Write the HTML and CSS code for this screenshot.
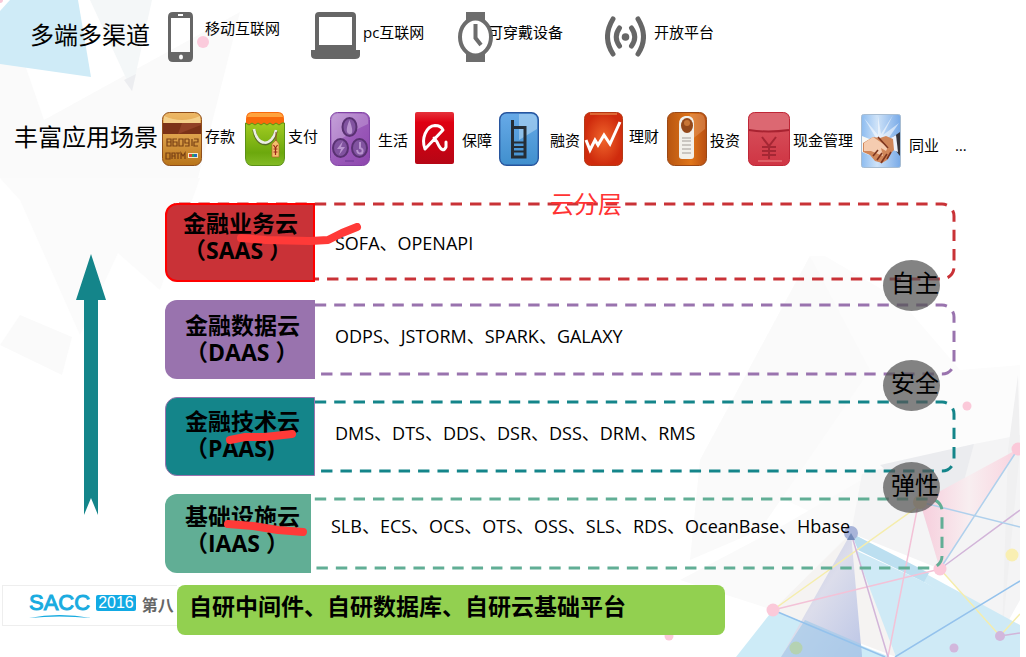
FILE: index.html
```html
<!DOCTYPE html>
<html lang="zh-CN">
<head>
<meta charset="utf-8">
<title>云分层</title>
<link rel="stylesheet" href="styles.css">
</head>
<body>
<main class="slide">
  <div class="backdrop" aria-hidden="true">
    <svg class="backdrop-left" width="400" height="420" viewBox="0 0 400 420">
      <path d="M24 62 44 120 240 12 198 178H0V63Z" fill="#fafafa"/>
      <path d="M0 178 200 178 160 290 118 253 80 335 20 200Z" fill="#fbfbfb"/>
      <path d="M20 315 72 337 62 375 0 345Z" fill="#fafafa"/>
      <path d="M90 0H152L132 91Z" fill="#f4f7f8"/>
      <path d="M124 80 136 74 132 91Z" fill="#ecedf0"/>
      <path d="M0 11 10 0H78L91 77 0 64Z" fill="#cfebf7"/>
      <circle cx="0" cy="0" r="3" fill="#f8c8d8"/>
      <circle cx="203" cy="42" r="6" fill="#fbcbdc"/>
    </svg>
    <svg class="backdrop-right" width="380" height="457" viewBox="640 200 380 457">
      <defs>
        <linearGradient id="lav" x1="0" y1="0" x2="1" y2="1"><stop offset="0" stop-color="#b4bbdf"/><stop offset="0.5" stop-color="#dcddeb"/><stop offset="1" stop-color="#bcc6e6"/></linearGradient>
        <linearGradient id="rose" x1="0" y1="0" x2="1" y2="0"><stop offset="0" stop-color="#f6cddc"/><stop offset="0.5" stop-color="#f8eef0"/><stop offset="1" stop-color="#f9d3df"/></linearGradient>
      </defs>
      <path d="M810 256H825L900 300 960 370 1020 365V500L860 535 700 460Z" fill="#fcfcfc"/>
      <path d="M810 256 700 460 690 560 760 530 870 370Z" fill="#fafafa"/>
      <path d="M680 580 775 530 870 475 851 533 773 610Z" fill="#fafafa"/>
      <path d="M862 474 974 444 1020 435V600L1000 636 940 569 851 533Z" fill="#f4f4f5"/>
      <path d="M974 444 880 465 920 502 940 569Z" fill="#ebecef"/>
      <path d="M1018 375 1020 450 1002 636 1008 450Z" fill="#f0f0f1"/>
      <path d="M851 533 773 610 896 657Z" fill="#f5f3f2"/>
      <path d="M773 610 736 657H890Z" fill="#cdebf7"/>
      <path d="M855 550 924 582 1020 634V657H896Z" fill="#cfeaf6"/>
      <path d="M851 533 1020 625V640L924 582Z" fill="#cfeaf6"/>
      <path d="M851 533 929 573 924 582 858 550Z" fill="#bcdff0"/>
      <path d="M851 533 781 657H862Z" fill="url(#lav)"/>
      <path d="M805 620 781 657H862L861 644Z" fill="#a4cbea" opacity=".7"/>
      <path d="M920 502 1018 449 940 569Z" fill="url(#rose)"/>
      <g fill="none" stroke-width="1.5">
        <path d="M773 610 920 505M940 569 1000 636 1020 614" stroke="#f5edac"/>
        <path d="M773 610 940 569M918 505 888 657" stroke="#f3c2d7"/>
        <path d="M851 533 888 657M940 569 1020 510M1000 636 1020 633" stroke="#d2b5d9"/>
        <path d="M1018 449 940 569M920 502 1020 527" stroke="#afd0ec"/>
        <path d="M773 610 885 657M895 657 1020 581" stroke="#94c2ec"/>
      </g>
      <circle cx="851" cy="533" r="7" fill="#a8b4d9"/>
      <path d="M851 533 847 540H855Z" fill="#7289b8"/>
      <g fill="#fbc9d9"><circle cx="1018" cy="449" r="6.500"/><circle cx="940" cy="569" r="6.500"/><circle cx="773" cy="610" r="6.500"/><circle cx="967" cy="406" r="4.500"/><circle cx="669" cy="636" r="4.500"/></g>
      <circle cx="1012" cy="555" r="6.500" fill="#f9efb2"/>
      <circle cx="796" cy="648" r="6.500" fill="#b5d2b2"/>
      <circle cx="954" cy="648" r="4.500" fill="#d2b7dc"/>
      <circle cx="1000" cy="636" r="5" fill="#d2b7dc"/>
      <circle cx="920" cy="502" r="7" fill="#f3d9b0"/>
    </svg>
  </div>

  <section class="row channels">
    <h2 class="heading">多端多渠道</h2>
    <div class="item raised">
      <svg class="icon phone" width="26" height="50" viewBox="0 0 26 50"><path fill-rule="evenodd" fill="#666" d="M5 0H21Q25 0 25 5V45Q25 50 21 50H5Q0 50 0 45V5Q0 0 5 0ZM3 6V40H22V6ZM10 2V4H15V2ZM13 42.500A2 2.500 0 1 0 13 47.500A2 2.500 0 1 0 13 42.500Z"/></svg>
      <span class="label">移动互联网</span>
    </div>
    <div class="item">
      <svg class="icon" width="49" height="50" viewBox="0 0 49 50"><path fill-rule="evenodd" fill="#666" d="M8 0H41Q45 0 45 4V38H49V43Q49 47 44 47H5Q0 47 0 43V38H4V4Q4 0 8 0ZM8 5V33H41V5Z"/></svg>
      <span class="label">pc互联网</span>
    </div>
    <div class="item overlap">
      <svg class="icon" width="35" height="50" viewBox="0 0 35 50"><path fill="#666" d="M8 0H27V9H8ZM8 41H27V50H8Z"/><ellipse cx="17.500" cy="25" rx="15.500" ry="18.500" fill="#fff" stroke="#666" stroke-width="4"/><path d="M17.500 12V26L23 33" fill="none" stroke="#666" stroke-width="4"/></svg>
      <span class="label">可穿戴设备</span>
    </div>
    <div class="item wide">
      <svg class="icon" width="41" height="42" viewBox="0 0 41 42"><circle cx="20.500" cy="21" r="3.800" fill="#666"/><g fill="none" stroke="#666" stroke-width="5" stroke-linecap="round"><path d="M8 3Q-3 21 8 38M14.500 12Q8 21 14.500 30M33 3Q44 21 33 38M26.500 12Q33 21 26.500 30"/></g></svg>
      <span class="label">开放平台</span>
    </div>
  </section>

  <section class="row scenes">
    <h2 class="heading">丰富应用场景</h2>
    <div class="item raised">
      <svg class="icon" width="40" height="54" viewBox="0 0 40 54"><defs><linearGradient id="card" x1="0" y1="0" x2="0" y2="1"><stop offset="0" stop-color="#edb866"/><stop offset=".45" stop-color="#dca04a"/><stop offset="1" stop-color="#b87419"/></linearGradient></defs><rect x=".5" y=".5" width="39" height="53" rx="7" fill="url(#card)" stroke="#8f4e1a"/><path d="M2 4Q20 12 38 4V11H2Z" fill="#fbe0a3" opacity=".65"/><path d="M1 11H39V22H1Z" fill="#7b3218"/><path d="M16 22 39 13V11H20Z" fill="#914126"/><g fill="none" stroke="#784015" stroke-width="1.200"><path d="M5 27H9V34H5ZM5 30H9M15 27H11V34H15V30H11M17 27H21V34H17ZM27 27H23V31H27M27 27V34H23M30 27V34M32 27H36V30H32V34H36"/><path d="M4 41H8V47H4ZM10 47V41H13V47M10 44H13M14 41H18M16 41V47M19 47V41L21 44 23 41V47"/></g><path d="M26 41H36V46H26Z" fill="#f2e9c8"/><path d="M27 42H30V45H27Z" fill="#d43"/><path d="M30 42H32V45H30Z" fill="#2aa55a"/><path d="M32 42H35V45H32Z" fill="#236dbb"/></svg>
      <span class="label">存款</span>
    </div>
    <div class="item raised">
      <svg class="icon" width="40" height="54" viewBox="0 0 40 54"><defs><linearGradient id="bag" x1="0" y1="0" x2="0" y2="1"><stop offset="0" stop-color="#a2cb21"/><stop offset=".7" stop-color="#6ca80d"/><stop offset="1" stop-color="#83bb25"/></linearGradient></defs><path d="M7 0H33Q39 0 39 7V15H1V7Q1 0 7 0Z" fill="#f96a0b"/><path d="M7 1H33Q37 1 38 5H2Q3 1 7 1Z" fill="#ffa33d"/><path d="M0.500 11 4 13 7 11 10 13 13 11 16 13 19 11 22 13 25 11 28 13 31 11 34 13 37 11H39.500V46Q39 53.500 33 53.500H7Q1 53.500 .5 46Z" fill="url(#bag)" stroke="#5b9117"/><path d="M9 18C12 36 27 36 31 19" fill="none" stroke="#586e28" stroke-width="3.500"/><path d="M9 17C12 35 27 35 31 18" fill="none" stroke="#eceee6" stroke-width="2.500"/><path d="M27 32 31 28 34 32V45H27Z" fill="#f4c06c" stroke="#b2652c" stroke-width=".7"/><path d="M31 20V29" stroke="#944b29"/><path d="M28.500 33 30.500 36 32.500 33M30.500 36V43M28.500 37H32.500M28.500 40H32.500" fill="none" stroke="#9b2819" stroke-width="1.200"/></svg>
      <span class="label">支付</span>
    </div>
    <div class="item spaced">
      <svg class="icon" width="40" height="54" viewBox="0 0 40 54"><defs><linearGradient id="vio" x1="0" y1="0" x2="1" y2="1"><stop offset="0" stop-color="#bb93d2"/><stop offset=".5" stop-color="#9b5bba"/><stop offset="1" stop-color="#8d45ad"/></linearGradient></defs><rect x=".5" y=".5" width="39" height="53" rx="7" fill="url(#vio)" stroke="#8143a5"/><path d="M7 2H34Q38 3 38 8V12Q24 18 2 33V7Q3 2 7 2Z" fill="#d8bee5" opacity=".35"/><g fill="#8153a0" stroke="#593172" stroke-width="2"><ellipse cx="19.500" cy="15" rx="7" ry="9"/><ellipse cx="10.500" cy="36" rx="7.500" ry="9"/><ellipse cx="29.500" cy="36" rx="7.500" ry="9"/></g><path d="M19.500 8Q14 21 19.500 22T19.500 8M13 29 7 37H11L9 43 15 35H11Z" fill="#b994cf"/><path d="M30 30V36Q34 37 32 41 28 43 27 38" fill="none" stroke="#b994cf" stroke-width="2"/><path d="M15 49H24" stroke="#6c3694"/></svg>
      <span class="label">生活</span>
    </div>
    <div class="item spaced">
      <svg class="icon" width="39" height="54" viewBox="0 0 39 54"><defs><linearGradient id="umb" x1="0" y1="0" x2="0" y2="1"><stop offset="0" stop-color="#e5323b"/><stop offset=".2" stop-color="#df0012"/><stop offset="1" stop-color="#b60615"/></linearGradient></defs><rect width="39" height="52" rx="2" fill="url(#umb)"/><path d="M10 37C6 27 11 14 20 13.500Q26 13.500 28 18L10 37M19 26Q22 29 24 34 28 41 31 35V30" fill="none" stroke="#fff" stroke-width="3" stroke-linejoin="round" stroke-linecap="round"/></svg>
      <span class="label">保障</span>
    </div>
    <div class="item loose">
      <svg class="icon" width="40" height="54" viewBox="0 0 40 54"><defs><linearGradient id="blu" x1="0" y1="0" x2="0" y2="1"><stop offset="0" stop-color="#67aae8"/><stop offset="1" stop-color="#408fcd"/></linearGradient></defs><rect x=".7" y=".7" width="38.600" height="52.600" rx="7" fill="url(#blu)" stroke="#27559e" stroke-width="1.400"/><path d="M8 2H32Q38 2 38 9V17L20 28V2Z" fill="#b9dbf4" opacity=".55"/><path d="M13.500 8V45H26V15.500H14" fill="none" stroke="#252d35" stroke-width="3"/><path d="M15 30.500H26M15 35H26M15 39.500H26" stroke="#252d35" stroke-width="2"/></svg>
      <span class="label">融资</span>
    </div>
    <div class="item raised medium">
      <svg class="icon" width="39" height="54" viewBox="0 0 39 54"><defs><radialGradient id="org"><stop offset="0" stop-color="#f0662c"/><stop offset="1" stop-color="#cf2b0d"/></radialGradient></defs><rect x=".5" y=".5" width="38" height="53" rx="6" fill="url(#org)" stroke="#b63915"/><path d="M6 2H33" stroke="#eca45a"/><path d="M2 28 6 38 11 28 14 33 20 23 26 32 36 10" fill="none" stroke="#fff" stroke-width="3"/></svg>
      <span class="label">理财</span>
    </div>
    <div class="item">
      <svg class="icon" width="40" height="54" viewBox="0 0 40 54"><defs><linearGradient id="door"><stop offset="0" stop-color="#b85510"/><stop offset=".6" stop-color="#e0761a"/><stop offset="1" stop-color="#b84e12"/></linearGradient></defs><rect x=".5" y=".5" width="39" height="53" rx="7" fill="url(#door)" stroke="#9b4815"/><path d="M23 2H33Q38 3 38 9V17L23 29Z" fill="#e6a06b" opacity=".45"/><path d="M18 4H22Q27 5 27 12V44Q27 47 24 47H15Q12 47 12 44V12Q12 5 18 4Z" fill="#f2f0eb"/><ellipse cx="20" cy="13.500" rx="6" ry="7.500" fill="#94481a"/><circle cx="20" cy="11" r="3" fill="#c87535"/><path d="M15 26H24M15 29H24M15 33H24M15 37H24M15 41H24" stroke="#bdb8b4" stroke-width="1.500"/></svg>
      <span class="label">投资</span>
    </div>
    <div class="item">
      <svg class="icon" width="42" height="54" viewBox="0 0 42 54"><defs><linearGradient id="red" x1="0" y1="0" x2="0" y2="1"><stop offset="0" stop-color="#d85660"/><stop offset="1" stop-color="#cf3544"/></linearGradient></defs><rect x=".5" y=".5" width="41" height="53" rx="6" fill="url(#red)" stroke="#bf2737"/><path d="M1 18Q20 22 41 18V7Q40 1 34 1H8Q2 1 1 7Z" fill="#dc6872"/><path d="M1 18Q20 21 41 18" fill="none" stroke="#a82331" stroke-width="2"/><path d="M14 25 21 34 28 25M21 34V47M14 35H28M14 39H28M14 43H28" fill="none" stroke="#a52734" stroke-width="2"/><path d="M10 49H34" stroke="#e88"/></svg>
      <span class="label">现金管理</span>
    </div>
    <div class="item spaced lowered">
      <svg class="icon" width="40" height="54" viewBox="0 0 40 54"><defs><linearGradient id="sky"><stop offset="0" stop-color="#8dbcf0"/><stop offset=".4" stop-color="#cfe3f8"/><stop offset="1" stop-color="#78aae8"/></linearGradient></defs><rect x=".5" y=".5" width="39" height="53" rx="2" fill="url(#sky)" stroke="#a8bdd2"/><path d="M15 24 3 4 17 21 17 2 20 20 32 1 22 21 38 9 27 25" fill="#fff" opacity=".55"/><path d="M1 22 11 26 8 41 1 38Z" fill="#f8f8f5"/><path d="M39 18 32 23 35 37 39 42Z" fill="#35343b"/><path d="M35 21 30 24 32 36 37 38Z" fill="#eef1fa"/><path d="M2 29 12 23 19 24 25 22 32 25 33 36 29 40 26 46 21 49 14 47 9 41 2 38Z" fill="#d08659"/><path d="M3 29 12 23 27 33 25 37 20 34 22 42 10 37 3 37Z" fill="#f5ccb0"/><path d="M17 23 27 34M12 42 17 36M16 46 21 39M20 49 26 40M26 45 30 38" fill="none" stroke="#7d351f" stroke-width="1.600"/></svg>
      <span class="label">同业</span>
    </div>
    <div class="item lowered"><span class="label">…</span></div>
  </section>

  <section class="cloud">
    <svg class="arrow" width="30" height="261" viewBox="0 0 30 261" aria-hidden="true"><path d="M15 0 30 46H22V261L15 244 8 261V46H0Z" fill="#14858a"/></svg>
    <div class="layers">
      <article class="layer saas">
        <svg class="outline" aria-hidden="true"><rect rx="12"/></svg>
        <h3 class="name">金融业务云<br>（SAAS ）</h3>
        <p class="services">SOFA、OPENAPI</p>
        <span class="title">云分层</span>
        <span class="badge">自主</span>
        <svg class="mark" width="126" height="24" viewBox="0 0 126 24" aria-hidden="true"><path d="M5 15 30 17 74 18 92 17 106 10 121 4"/></svg>
      </article>
      <article class="layer daas">
        <svg class="outline" aria-hidden="true"><rect rx="12"/></svg>
        <h3 class="name">金融数据云<br>（DAAS ）</h3>
        <p class="services">ODPS、JSTORM、SPARK、GALAXY</p>
        <span class="badge">安全</span>
      </article>
      <article class="layer paas">
        <svg class="outline" aria-hidden="true"><rect rx="12"/></svg>
        <h3 class="name">金融技术云<br>（PAAS)</h3>
        <p class="services">DMS、DTS、DDS、DSR、DSS、DRM、RMS</p>
        <span class="badge">弹性</span>
        <svg class="mark" width="72" height="16" viewBox="0 0 72 16" aria-hidden="true"><path d="M5 11 20 8 40 8 67 5"/></svg>
      </article>
      <article class="layer iaas">
        <svg class="outline" aria-hidden="true"><rect rx="12"/></svg>
        <h3 class="name">基础设施云<br>（IAAS ）</h3>
        <p class="services">SLB、ECS、OCS、OTS、OSS、SLS、RDS、OceanBase、Hbase</p>
        <svg class="mark" width="88" height="20" viewBox="0 0 88 20" aria-hidden="true"><path d="M5 6 30 8 55 12 80 14"/></svg>
      </article>
    </div>
  </section>

  <footer class="base">
    <div class="brand">
      <span class="logo">SACC<svg class="swoosh" width="62" height="5" viewBox="0 0 62 5" aria-hidden="true"><path d="M0 4Q30-2 62 4Q30 1 0 4Z" fill="#18abe0"/></svg></span>
      <span class="year">2016</span>
      <span class="nth">第八</span>
    </div>
    <p class="platform">自研中间件、自研数据库、自研云基础平台</p>
  </footer>
</main>
</body>
</html>
```
FILE: styles.css
```css
* { box-sizing: border-box; }

body {
  margin: 0;
  background: #fff;
  color: #000;
  font-family: "Open Sans", "Noto Sans CJK SC", sans-serif;
}

h2, h3, p { margin: 0; }

.slide {
  position: relative;
  min-height: 100vh;
  padding: 9px 6px 22px 0;
}

.backdrop {
  position: absolute;
  inset: 0 6px 0 0;
  overflow: hidden;
}
.backdrop-left { position: absolute; left: 0; top: 0; }
.backdrop-right { position: absolute; right: 0; bottom: 0; }

.row, .cloud, .base { position: relative; }

.row {
  display: grid;
  align-items: center;
  height: 56px;
}

.channels {
  grid-template-columns: 138fr 143fr 147fr 147fr 415fr;
  padding-left: 30px;
}

.scenes {
  grid-template-columns: 148fr 83fr 85fr 85fr 84fr 85fr 83fr 81fr 113fr 94fr 65fr;
  padding-left: 14px;
  margin-top: 44px;
}

.heading {
  padding-bottom: 4px;
  font-size: 24px;
  font-weight: 400;
  line-height: 28px;
  white-space: nowrap;
}

.item {
  display: flex;
  align-items: center;
  gap: 3px;
}
.icon { flex: none; display: block; }

.label {
  font-size: 15px;
  line-height: 20px;
  white-space: nowrap;
}

.channels .label { padding-bottom: 10px; }
.channels .raised { gap: 11px; }
.channels .raised .label { padding-bottom: 18px; }
.channels .overlap { gap: 0; }
.overlap .label { margin-left: -5px; }
.overlap .icon { opacity: .95; }

.scenes .label { padding-top: 3px; }
.scenes .raised .label { padding-top: 0; padding-bottom: 5px; }
.scenes .lowered { padding-top: 5px; }
.scenes .lowered .label { padding-top: 7px; }
.spaced, .wide { gap: 8px; }
.medium { gap: 6px; }
.loose { gap: 11px; }

.cloud {
  display: grid;
  grid-template-columns: 165px 1fr;
  margin-top: 38px;
  padding-right: 64px;
}

.arrow { margin: 51px 0 0 76px; }

.layers {
  display: grid;
  gap: 18px;
}

.layer {
  position: relative;
  display: grid;
  grid-template-columns: 150px 1fr;
  align-items: stretch;
  min-height: 79px;
}

.outline {
  position: absolute;
  left: 0;
  top: 3px;
  width: 100%;
  height: calc(100% - 6px);
}
.outline rect {
  x: 2px;
  y: 2px;
  width: calc(100% - 4px);
  height: calc(100% - 4px);
  fill: none;
  stroke: var(--tone);
  stroke-width: 3;
  stroke-dasharray: 11.4 8;
}

.name {
  position: relative;
  padding: 12px 0 0 20px;
  border-radius: 12px 0 0 12px;
  background: var(--tone);
  font-size: 23px;
  line-height: 27px;
  font-weight: 700;
  white-space: nowrap;
}

.services {
  position: relative;
  align-self: center;
  padding: 0 0 8px 20px;
  font-size: 18px;
  line-height: 26px;
}

.saas { --tone: #c93237; }
.daas { --tone: #9973ae; }
.paas { --tone: #14858a; }
.iaas { --tone: #61ae95; grid-template-columns: 146px 1fr; margin-right: 12px; }

.saas .outline { top: -1px; height: 100%; }
.saas .name { border: 2px solid #f00; padding-top: 5px; padding-left: 16px; }
.saas .services { padding-bottom: 0; }
.paas .name { border: 1px solid #9973ae; padding-top: 10px; padding-left: 19px; }
.iaas .name { padding-top: 9px; }
.iaas .services { padding-bottom: 16px; }

.title {
  position: absolute;
  left: 385px;
  top: -13px;
  color: #f33;
  font-size: 24px;
  line-height: 28px;
}

.badge {
  position: absolute;
  z-index: 2;
  right: 16px;
  top: 60px;
  width: 57px;
  height: 51px;
  padding-left: 8px;
  border-radius: 50%;
  background: rgba(85, 85, 85, .73);
  font-size: 24px;
  line-height: 46px;
  white-space: nowrap;
}
.saas .badge { top: 57px; }
.paas .badge { top: 65px; }

.mark { position: absolute; }
.mark path {
  fill: none;
  stroke: #ff3a38;
  stroke-width: 8;
  stroke-linecap: round;
  stroke-linejoin: round;
}
.saas .mark { left: 71px; top: 20px; }
.paas .mark { left: 60px; top: 32px; }
.iaas .mark { left: 58px; top: 24px; }

.base {
  display: grid;
  grid-template-columns: 175px minmax(0, 548px);
  align-items: start;
  margin-top: 12px;
  padding-left: 2px;
}

.brand {
  display: flex;
  align-items: center;
  gap: 6px;
  height: 41px;
  padding: 0 0 6px 26px;
  overflow: hidden;
  border: 1px solid #eee;
  border-right: 0;
  background: #fff;
  font-family: "Liberation Sans", "Noto Sans CJK SC", sans-serif;
}
.logo {
  position: relative;
  color: #18abe0;
  font-size: 22px;
  line-height: 26px;
  -webkit-text-stroke: 1px #18abe0;
}
.swoosh { position: absolute; left: 0; bottom: -3px; }
.year {
  padding: 0 2px;
  border-radius: 2px;
  background: #12aae4;
  color: #fff;
  font-size: 16px;
  line-height: 16px;
}
.nth {
  flex: none;
  padding-top: 6px;
  color: #666;
  font-size: 16px;
  font-weight: 700;
  line-height: 20px;
}

.platform {
  min-height: 50px;
  padding: 7px 12px;
  border-radius: 8px;
  background: #92d050;
  font-size: 23px;
  font-weight: 700;
  line-height: 28px;
}
```
